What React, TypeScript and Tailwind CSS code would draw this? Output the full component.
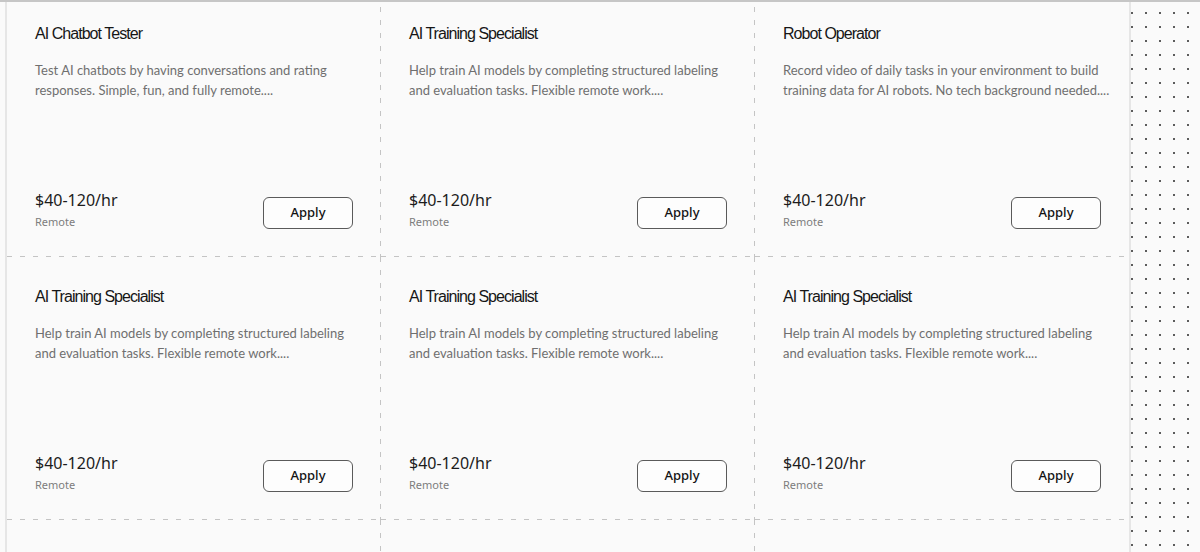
import React from 'react';

interface Job {
  title: string;
  description: string;
}

const jobs: Job[] = [
  {
    title: 'AI Chatbot Tester',
    description: 'Test AI chatbots by having conversations and rating responses. Simple, fun, and fully remote....',
  },
  {
    title: 'AI Training Specialist',
    description: 'Help train AI models by completing structured labeling and evaluation tasks. Flexible remote work....',
  },
  {
    title: 'Robot Operator',
    description: 'Record video of daily tasks in your environment to build training data for AI robots. No tech background needed....',
  },
  {
    title: 'AI Training Specialist',
    description: 'Help train AI models by completing structured labeling and evaluation tasks. Flexible remote work....',
  },
  {
    title: 'AI Training Specialist',
    description: 'Help train AI models by completing structured labeling and evaluation tasks. Flexible remote work....',
  },
  {
    title: 'AI Training Specialist',
    description: 'Help train AI models by completing structured labeling and evaluation tasks. Flexible remote work....',
  },
];

const cellLines =
  'h-[263px] [background:repeating-linear-gradient(to_bottom,#c4c4c4_0_5px,transparent_5px_13px)_right_top/1px_100%_no-repeat,repeating-linear-gradient(to_right,#c4c4c4_0_5px,transparent_5px_13px)_left_bottom/100%_1px_no-repeat]';
const lastCellLines =
  'h-[263px] [background:repeating-linear-gradient(to_right,#c4c4c4_0_5px,transparent_5px_13px)_left_bottom/100%_1px_no-repeat]';

const JobCard: React.FC<{ job: Job; last: boolean }> = ({ job, last }) => {
  return (
    <div className={(last ? lastCellLines : cellLines) + ' flex flex-col p-7'}>
      {/* Title + blurb */}
      <div className="text-[16px] leading-6 text-[#161616] tracking-[-0.06em] font-['Liberation_Sans',Arial,sans-serif]">
        {job.title}
      </div>
      <p className="mt-3.5 -mr-3 text-[13px] leading-5 text-[#6f6f6f] font-['Lato',sans-serif]">
        {job.description}
      </p>

      <div className="flex-1"></div>

      {/* Rate + apply */}
      <div className="flex items-end justify-between font-['Noto_Sans',sans-serif]">
        <div className="flex flex-col">
          <span className="text-[16px] leading-6 text-[#1c1c1c] mb-[3px]">$40-120/hr</span>
          <span className="text-[11px] leading-[14px] text-[#7d7d7d]">Remote</span>
        </div>
        <button className="w-[90px] h-[32px] rounded-md border border-[#5a5a5a] bg-[#fdfdfd] text-[13px] font-medium text-[#121212]">
          Apply
        </button>
      </div>
    </div>
  );
};

export default function App() {
  return (
    <div className="w-[1200px] h-[552px] overflow-hidden bg-[#fafafa] border-t-2 border-[#c6c6c6] flex">
      <div className="w-[5px] shrink-0"></div>

      {/* Card grid */}
      <div className="w-[1126px] shrink-0 border-l-2 border-r-2 border-[#e6e6e6] h-full overflow-hidden">
        <div className="grid grid-cols-[374px_374px_374px] -mt-[8px]">
          {jobs.map((job, i) => (
            <JobCard key={i} job={job} last={i % 3 === 2} />
          ))}
          {/* next row, scrolled below the fold */}
          <div className={cellLines}></div>
          <div className={cellLines}></div>
          <div className={lastCellLines}></div>
        </div>
      </div>

      {/* Dotted canvas strip */}
      <div className="flex-1 h-full [background-image:radial-gradient(circle_at_1px_1px,#5c5c5c_1px,transparent_1.3px)] [background-size:14px_14px] [background-position:0px_10px]"></div>
    </div>
  );
}
